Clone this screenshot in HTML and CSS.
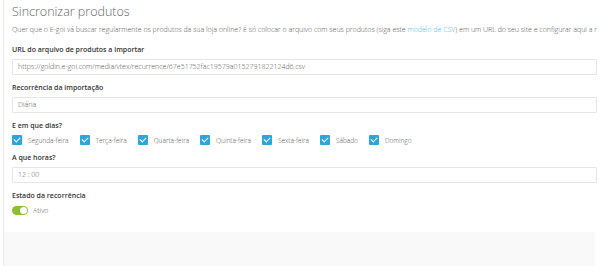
FILE: index.html
```html
<!DOCTYPE html>
<html lang="pt">

    <head>
        <meta charset="UTF-8">
        <meta name="viewport" content="width=device-width, initial-scale=1.0">
        <title>Sincronizar produtos</title>

        <link rel="stylesheet" href="styles.css">

    </head>

    <body>
        <div class="panel">
            <div class="content">
                <h2 class="title">Sincronizar produtos</h2>
                <p class="intro">Quer que o E-goi vá buscar regularmente os produtos da sua loja online? É só colocar o arquivo com seus produtos (siga este <a href="#">modelo de CSV</a>) em um URL do seu site e configurar aqui a recorrência da importação.</p>

                <div class="field">
                    <label>URL do arquivo de produtos a importar</label>
                    <div class="input">https://goldin.e-goi.com/media/vtex/recurrence/67e51752fac19579a0152791822124d6.csv</div>
                </div>

                <div class="field">
                    <label>Recorrência da importação</label>
                    <div class="input">Diária</div>
                </div>

                <div class="field">
                    <label>E em que dias?</label>
                    <div class="days">
                        <span class="day"><span class="check"></span>Segunda-feira</span>
                        <span class="day"><span class="check"></span>Terça-feira</span>
                        <span class="day"><span class="check"></span>Quarta-feira</span>
                        <span class="day"><span class="check"></span>Quinta-feira</span>
                        <span class="day"><span class="check"></span>Sexta-feira</span>
                        <span class="day"><span class="check"></span>Sábado</span>
                        <span class="day"><span class="check"></span>Domingo</span>
                    </div>
                </div>

                <div class="field">
                    <label>A que horas?</label>
                    <div class="input">12 : 00</div>
                </div>

                <div class="field">
                    <label>Estado da recorrência</label>
                    <div class="state">
                        <span class="toggle"></span>
                        <span class="state-text">Ativo</span>
                    </div>
                </div>
            </div>
            <div class="footer"></div>
        </div>
    </body>

</html>
```

FILE: styles.css
```css
* {
    margin: 0;
    padding: 0;
    box-sizing: border-box;
}

body {
    font-family: 'Open Sans', sans-serif;
    background-color: #fff;
    color: #666;
}

.panel {
    margin-left: 3px;
    width: 594px;
    min-height: 266px;
    border-left: 1px solid #ececec;
    display: flex;
    flex-direction: column;
}

.content {
    padding: 3px 0 0 8px;
}

.title {
    font-size: 12.5px;
    font-weight: 300;
    line-height: 18px;
    color: #666;
}

.intro {
    margin-top: 4px;
    font-size: 7px;
    font-weight: 300;
    line-height: 9px;
    white-space: nowrap;
    overflow: hidden;
    color: #555;
}

.intro a {
    color: #45b5e0;
    text-decoration: none;
}

.field {
    margin-top: 11px;
}

.field + .field {
    margin-top: 8px;
}

label {
    display: block;
    font-size: 7px;
    font-weight: 600;
    line-height: 9px;
    color: #333;
    margin-bottom: 5px;
}

.input {
    height: 16px;
    border: 1px solid #e6e6e6;
    border-radius: 1px;
    padding-left: 5px;
    font-size: 7px;
    font-weight: 300;
    line-height: 14px;
    color: #555;
}

.days {
    display: flex;
    gap: 11px;
    height: 10px;
    align-items: center;
}

.day {
    display: flex;
    align-items: center;
    font-size: 6.5px;
    font-weight: 300;
    color: #555;
}

.check {
    width: 10px;
    height: 10px;
    margin-right: 6px;
    border-radius: 1px;
    background-color: #2ea5d8;
    position: relative;
}

.check::after {
    content: '';
    position: absolute;
    left: 3px;
    top: 1px;
    width: 3px;
    height: 5px;
    border: solid #fff;
    border-width: 0 1.3px 1.3px 0;
    transform: rotate(45deg);
}

.state {
    display: flex;
    align-items: center;
    height: 10px;
}

.toggle {
    width: 16px;
    height: 9px;
    border-radius: 5px;
    background-color: #8dbf32;
    position: relative;
    margin-right: 5px;
}

.toggle::after {
    content: '';
    position: absolute;
    right: 1px;
    top: 1px;
    width: 7px;
    height: 7px;
    border-radius: 50%;
    background-color: #fff;
}

.state-text {
    font-size: 7px;
    font-weight: 300;
    color: #555;
}

.footer {
    margin-top: 17px;
    flex: 1;
    margin-right: 2px;
    background-color: #f9f9f9;
}
```
